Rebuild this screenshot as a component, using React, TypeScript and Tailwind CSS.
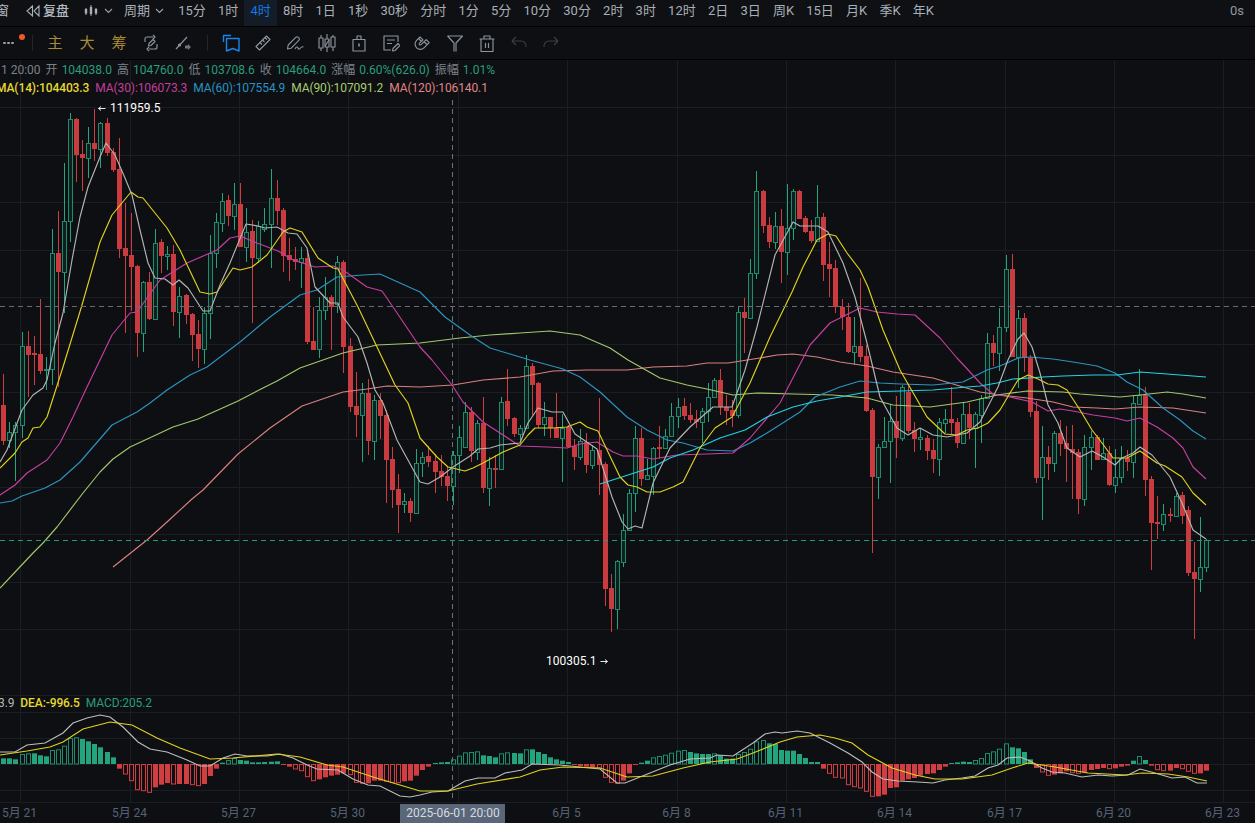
// K-line chart page
type Candle = [number, number, number, number, number]

// [up, high, bodyTop, bodyBottom, low] in page pixels
const candles: Candle[] = [
  [0,374,405,441,445],[1,422,432,440,448],[1,422,425,432,481],[1,332,346,425,438],[0,331,346,355,397],[0,336,353,355,385],[0,299,354,371,374],[1,357,369,370,390],[1,229,253,369,385],[0,211,253,272,387],
  [1,163,221,272,313],[1,113,119,221,242],[0,118,119,155,182],[0,140,154,158,191],[1,127,143,158,178],[0,109,143,149,161],[1,122,123,149,168],[0,118,123,153,156],[0,148,152,170,172],[0,138,169,249,258],
  [0,203,248,256,333],[0,213,255,267,311],[0,265,266,333,357],[1,281,282,333,352],[0,272,282,319,320],[1,229,243,319,320],[0,239,242,256,273],[1,246,254,256,270],[0,245,254,312,326],[1,287,296,312,338],
  [0,294,295,315,324],[0,313,314,335,361],[0,320,334,349,368],[1,307,313,349,364],[1,235,253,313,339],[1,213,222,253,268],[1,193,201,223,232],[0,195,200,216,226],[1,183,204,216,230],[0,183,204,247,247],
  [1,208,232,247,262],[0,220,231,258,323],[1,221,226,258,263],[1,208,224,229,232],[1,169,198,224,268],[0,180,198,211,225],[0,208,210,256,272],[0,238,255,260,281],[0,247,259,262,270],[1,247,258,262,288],
  [0,250,258,342,344],[0,307,341,350,350],[1,297,310,349,358],[1,277,297,310,320],[0,295,297,307,350],[1,256,262,304,313],[0,260,262,347,373],[0,338,346,407,412],[0,372,406,415,437],[1,383,393,415,462],
  [0,379,393,441,455],[1,395,400,441,460],[0,393,400,416,439],[0,410,415,460,503],[0,447,459,490,508],[0,474,489,505,533],[1,493,501,504,513],[0,498,501,513,522],[1,449,463,513,513],[1,452,457,463,477],
  [0,446,456,462,467],[0,454,461,472,493],[0,455,471,477,486],[0,467,476,486,501],[1,451,455,486,505],[1,426,437,455,473],[1,402,412,447,447],[0,407,412,451,462],[1,420,423,452,460],[0,397,423,488,493],
  [1,457,468,488,506],[0,455,468,470,488],[1,397,402,469,470],[0,369,401,419,426],[0,417,418,434,437],[1,425,428,434,443],[1,355,366,428,429],[0,363,366,385,415],[0,382,383,425,428],[1,402,417,424,436],
  [0,417,417,428,438],[0,393,428,438,438],[1,414,428,438,482],[0,425,427,447,447],[0,439,446,457,470],[1,429,441,457,460],[0,433,442,465,473],[1,445,450,465,469],[0,398,450,465,495],[0,462,464,589,606],
  [0,574,588,609,632],[1,560,561,609,629],[1,514,530,562,567],[1,489,493,530,531],[1,426,438,493,512],[0,428,438,479,486],[1,459,475,479,480],[1,447,448,476,495],[0,426,447,449,459],[1,429,436,448,448],
  [1,403,416,436,436],[1,398,407,416,428],[0,398,406,416,420],[0,403,415,420,423],[0,410,419,422,428],[1,408,411,422,443],[1,383,397,411,422],[1,378,380,397,397],[0,369,380,407,415],[0,395,407,411,425],
  [0,400,410,416,427],[1,307,312,415,418],[0,298,312,318,353],[1,259,273,318,318],[1,171,191,273,279],[0,190,191,226,233],[0,217,225,242,248],[1,212,226,242,249],[0,209,226,252,283],[1,184,228,252,275],
  [1,189,191,228,240],[0,190,191,219,219],[0,216,218,232,233],[0,220,231,241,243],[1,185,217,241,241],[0,213,217,265,281],[0,242,264,269,297],[0,260,268,307,313],[0,299,307,317,330],[0,303,317,352,353],
  [1,317,346,352,365],[0,278,346,357,362],[0,345,356,411,412],[0,408,410,477,553],[1,444,447,477,499],[1,417,441,447,448],[1,404,421,441,483],[0,396,421,438,458],[1,385,387,438,441],[0,384,392,431,433],
  [0,422,430,439,452],[1,428,437,439,450],[0,435,438,451,460],[0,439,450,459,473],[1,418,422,459,476],[1,409,419,423,433],[0,387,419,423,434],[0,418,422,443,448],[1,402,414,443,443],[0,403,414,428,439],
  [1,412,414,428,468],[1,395,398,415,443],[1,333,343,398,398],[0,335,343,353,366],[1,308,327,353,371],[1,255,269,327,332],[0,254,269,357,357],[1,310,318,357,388],[0,313,318,358,372],[0,355,358,412,417],
  [0,401,411,478,483],[1,426,457,477,520],[0,446,457,464,480],[1,431,433,463,472],[0,420,433,444,456],[0,426,443,449,482],[0,425,449,453,499],[0,449,452,499,514],[1,435,447,499,506],[1,431,437,447,470],
  [0,435,437,460,460],[1,438,453,459,460],[0,446,453,485,486],[1,449,477,485,493],[1,446,458,477,483],[0,450,458,462,471],[1,395,403,462,478],[1,369,395,404,405],[0,387,395,480,496],[0,476,479,523,570],
  [0,496,522,524,539],[1,504,514,524,531],[0,508,514,516,522],[1,493,496,516,516],[0,492,495,516,524],[0,506,510,573,576],[0,542,572,579,639],[1,517,567,579,592],[1,539,540,567,572],
]

const macd: number[] = [
  17,17,14,30,32,32,26,23,42,44,55,78,80,75,68,60,50,36,20,
  -14,-30,-50,-77,-80,-85,-70,-62,-57,-60,-60,-60,-62,-65,-60,-36,-14,4,12,18,12,10,5,5,6,7,8,-3,-8,-15,-20,-38,-50,-46,-40,-35,-32,-28,-32,-55,-58,-58,-50,-50,-52,-55,-56,-52,-50,-35,
  -18,-8,3,5,6,14,25,35,36,38,26,24,20,32,35,33,32,44,44,36,30,20,14,10,6,-3,-6,-8,-10,-12,-40,-55,-58,-50,-28,-3,4,10,20,24,28,34,40,42,36,32,30,30,32,26,16,16,30,36,46,68,72,62,60,42,40,40,30,18,6,6,-14,-28,
  -40,-42,-62,-68,-72,-82,-97,-97,-92,-72,-70,-50,-46,-42,-35,-30,-28,-18,-8,3,5,7,6,12,18,33,38,46,62,50,47,36,14,-12,-24,-34,-32,-28,-22,-26,-28,-26,-18,-15,-12,-14,-13,-8,-5,10,24,12,-5,-17,-20,-20,-12,-14,-22,-28,-28,-20,
]

const lines: { color: string; points: string }[] = [
  { color: "#d98080", points: "113,567 147,540 167,522 192,499 203,490 238,454 270,428 302,406 343,392 367,389 387,386 420,387 453,385 483,380 520,377 553,371 587,370 627,370 653,367 687,366 707,363 728,363 760,358 777,355 793,354 817,357 840,362 867,366 893,372 933,378 963,387 980,392 1000,395 1027,398 1053,402 1073,407 1097,408 1115,409 1140,407 1173,408 1206,413" },
  { color: "#a3c76c", points: "0,588 17,570 33,553 43,543 57,527 83,493 100,472 113,459 130,447 143,441 173,427 198,419 238,401 263,388 277,381 300,368 343,353 377,345 420,343 460,338 490,335 520,333 550,331 580,335 610,348 628,360 660,378 687,385 707,389 733,395 757,393 793,394 833,395 867,398 893,405 930,407 967,402 980,399 997,395 1027,391 1063,392 1080,394 1120,397 1140,395 1167,392 1183,394 1206,398" },
  { color: "#2d93c0", points: "0,503 12,501 22,496 45,488 60,480 80,462 112,425 137,412 150,403 167,390 190,375 207,367 240,342 270,317 300,295 317,290 337,277 363,275 380,274 400,283 420,292 445,317 470,335 490,348 510,354 530,360 563,369 580,377 600,392 627,417 647,430 667,440 683,443 707,450 733,451 750,443 767,433 800,412 815,397 840,387 860,381 880,383 900,384 933,385 963,382 973,377 987,370 1000,366 1018,358 1030,357 1053,359 1073,362 1097,366 1115,373 1127,382 1143,390 1163,408 1180,420 1193,431 1206,439" },
  { color: "#c63fa0", points: "0,495 15,485 27,473 47,460 60,443 73,417 87,387 112,335 130,313 137,312 160,280 187,263 217,250 230,238 240,236 257,243 278,251 293,260 315,267 333,266 343,270 367,287 382,291 393,307 420,347 432,360 452,385 463,402 483,422 520,446 547,447 567,448 580,444 597,442 613,452 623,456 637,456 653,459 677,455 707,454 733,453 750,438 780,403 797,370 810,345 830,323 860,308 877,312 897,314 915,315 940,338 957,358 970,372 980,383 993,394 1010,397 1032,402 1048,411 1060,409 1073,411 1093,415 1115,418 1127,421 1140,418 1157,427 1173,438 1183,448 1193,467 1206,479" },
  { color: "#22d3e6", points: "600,484 653,467 670,458 693,450 720,438 745,430 757,423 767,417 793,407 817,401 840,397 867,392 900,391 933,390 967,387 980,386 997,383 1013,379 1043,377 1063,376 1093,375 1117,375 1140,372 1167,374 1193,376 1206,377" },
  { color: "#e0d21d", points: "0,468 15,453 22,442 28,438 33,428 40,427 47,417 63,367 82,305 100,242 112,215 131,192 138,197 143,198 167,228 180,250 200,292 210,294 217,292 233,268 240,270 252,267 267,255 283,232 290,228 302,232 318,258 333,268 338,269 358,307 377,347 395,385 408,403 420,438 437,457 448,467 465,471 473,468 483,463 503,452 520,445 528,435 535,428 553,428 567,427 580,422 587,427 598,431 608,452 620,477 628,485 637,487 647,492 660,492 673,487 683,482 700,448 715,428 732,417 750,383 770,337 792,292 803,267 817,240 828,234 836,236 847,253 860,270 868,287 883,330 900,370 927,417 945,434 957,435 967,430 978,428 988,423 1000,410 1010,393 1018,380 1028,375 1038,379 1048,384 1058,385 1067,390 1080,410 1092,430 1102,443 1113,458 1127,458 1140,451 1157,463 1165,466 1182,477 1193,493 1206,505" },
  { color: "#b4b4b4", points: "0,462 7,450 22,410 33,395 43,388 47,380 55,343 63,313 72,260 80,217 88,187 100,157 106,143 115,155 125,178 132,195 140,230 148,263 155,278 165,279 173,285 179,280 188,288 203,311 210,311 220,285 230,263 246,224 258,226 265,228 277,227 288,233 297,234 307,248 315,287 330,303 338,303 343,317 358,337 367,363 375,390 383,403 397,440 420,482 428,484 440,477 453,467 470,456 478,449 490,448 500,445 520,443 528,423 538,408 552,412 563,412 575,434 597,449 612,497 622,522 628,529 635,526 642,528 653,483 670,448 690,427 713,407 732,407 745,370 757,327 775,255 793,222 800,226 818,226 828,232 843,263 855,297 867,343 880,397 897,428 908,435 920,428 933,435 947,437 967,433 980,422 998,387 1008,360 1018,339 1024,333 1032,347 1040,373 1048,405 1058,423 1067,448 1080,457 1092,451 1103,457 1115,465 1122,458 1133,453 1140,447 1152,455 1170,477 1182,503 1193,530 1206,539" },
]

const dif = "0,752 15,752 27,745 45,743 63,733 73,723 87,718 100,715 110,717 123,727 138,742 150,749 167,752 187,760 200,766 210,766 223,758 235,754 247,756 267,756 280,754 293,758 307,765 317,769 338,770 353,779 368,785 380,786 400,796 410,797 420,795 432,792 448,791 465,781 478,778 495,778 505,773 522,770 532,764 560,765 600,769 617,783 625,783 640,777 670,765 690,759 710,758 717,755 733,756 753,743 765,734 775,732 782,733 797,731 810,733 830,743 848,753 862,762 872,772 883,779 898,781 918,782 933,783 945,780 962,778 975,776 988,768 998,765 1007,758 1020,757 1030,761 1042,768 1052,772 1065,773 1082,777 1098,775 1112,776 1128,775 1140,769 1155,773 1172,778 1185,777 1197,783 1207,783"
const dea = "0,755 27,751 50,747 63,742 83,729 110,722 132,725 157,738 180,748 210,759 233,758 277,754 300,757 327,765 343,767 373,777 420,791 448,791 477,784 520,777 540,770 563,767 600,768 627,777 653,776 683,768 710,762 737,759 753,753 780,742 797,737 820,735 835,738 852,743 868,755 892,768 915,775 935,779 962,779 992,775 1012,768 1028,763 1055,767 1088,773 1125,775 1142,773 1168,774 1188,777 1207,781"

const gridX = [20.5, 130.5, 239.5, 348.5, 458.5, 567.5, 677.5, 786.5, 895.5, 1005.5, 1114.5, 1223.5]
const gridY = [107.5, 155.5, 202.5, 250.5, 297.5, 344.5, 392.5, 439.5, 487.5, 534.5, 582.5, 629.5, 695.5, 712.5, 738.5, 764.5, 790.5, 802.5]
const axis = ["5月 21", "5月 24", "5月 27", "5月 30", "", "6月 5", "6月 8", "6月 11", "6月 14", "6月 17", "6月 20", "6月 23"]

const periods = ["15分", "1时", "4时", "8时", "1日", "1秒", "30秒", "分时", "1分", "5分", "10分", "30分", "2时", "3时", "12时", "2日", "3日", "周K", "15日", "月K", "季K", "年K"]

const UP = "#22a67e"
const UP_BODY = "#1d8c6c"
const DOWN = "#d03d40"
const xAt = (n: number) => Math.round(3.3 + n * 6.074)

const Chevron = () => (
  <svg width="9" height="6" viewBox="0 0 9 6" fill="none" stroke="#9aa0a8" strokeWidth="1.1">
    <path d="M1 1l3.5 3.5L8 1" />
  </svg>
)

const Icon = ({ children, color = "#8d949d" }: { children: React.ReactNode; color?: string }) => (
  <span className="flex h-8 w-8 items-center justify-center">
    <svg width="18" height="18" viewBox="0 0 18 18" fill="none" stroke={color} strokeWidth="1.15" strokeLinejoin="round">
      {children}
    </svg>
  </span>
)

const ToolDivider = () => <span className="mx-[7.5px] h-[16px] w-px bg-[#22262b]" />

const Chart = () => (
  <svg className="absolute inset-0 block h-full w-full" viewBox="0 60 1255 763">
    {gridX.map((x) => (
      <line key={x} x1={x} x2={x} y1={60} y2={802} stroke="#1a1d21" />
    ))}
    {gridY.map((y) => (
      <line key={y} x1={0} x2={1255} y1={y} y2={y} stroke="#1a1d21" />
    ))}

    {candles.map(([up, high, top, bottom, low], n) => {
      const x = xAt(n)
      const color = up ? UP : DOWN
      return (
        <g key={n}>
          <line x1={x + 0.5} x2={x + 0.5} y1={high} y2={low} stroke={color} />
          {up ? (
            <rect x={x - 1.5} y={top + 0.5} width={4} height={bottom - top} fill="#0e1f1d" stroke={UP_BODY} />
          ) : (
            <rect x={x - 2} y={top} width={5} height={bottom - top} fill="#c93b3e" />
          )}
        </g>
      )
    })}

    {lines.map((l) => (
      <polyline key={l.color} points={l.points} fill="none" stroke={l.color} strokeWidth="1.15" strokeLinejoin="round" />
    ))}

    <line x1={0} x2={1255} y1={306.5} y2={306.5} stroke="#6b6878" strokeDasharray="5 4" />
    <line x1={0} x2={1255} y1={540.5} y2={540.5} stroke="#1f9c78" strokeDasharray="5 4" />
    <line x1={452.5} x2={452.5} y1={100} y2={802} stroke="#6d7178" strokeDasharray="5 4" />

    <path d="M98.5 108.5h7M98.5 108.5l2.5-2M98.5 108.5l2.5 2" stroke="#e8e8e8" fill="none" />
    <text x={110} y={112} fill="#ffffff" fontSize="12">111959.5</text>
    <text x={546} y={665} fill="#ffffff" fontSize="12">100305.1</text>
    <path d="M600.5 661.5h7M607.5 661.5l-2.5-2M607.5 661.5l-2.5 2" stroke="#e8e8e8" fill="none" />

    {macd.map((v, n) => {
      const h = Math.abs(v) / 3
      const x = xAt(n)
      const color = v > 0 ? UP_BODY : DOWN
      const prev = n > 0 ? macd[n - 1] : 0
      const hollow = prev * v > 0 && Math.abs(v) > Math.abs(prev) && h > 3.5
      const y = v > 0 ? 764 - h : 764
      return hollow ? (
        <rect key={n} x={x - 1.5} y={y + 0.5} width={4} height={h - 0.5} fill="none" stroke={color} />
      ) : (
        <rect key={n} x={x - 2} y={y} width={5} height={h} fill={v > 0 ? "#23a47d" : "#d13e41"} />
      )
    })}
    <polyline points={dif} fill="none" stroke="#bdbdbd" strokeWidth="1.15" />
    <polyline points={dea} fill="none" stroke="#e0d21d" strokeWidth="1.15" />

    {axis.map((label, i) =>
      label ? (
        <text key={i} x={gridX[i] - 1} y={817} textAnchor="middle" fill="#566378" fontSize="12">
          {label}
        </text>
      ) : null
    )}
    <rect x={400} y={804} width={105} height={19} fill="#5a6779" />
    <text x={453} y={817} textAnchor="middle" fill="#d5dae0" fontSize="12">2025-06-01 20:00</text>
  </svg>
)

const Value = ({ label, value }: { label: string; value: string }) => (
  <span className="flex gap-[4px]">
    <span className="text-[#7d828a]">{label}</span>
    <span className="text-[#2a9d7c]">{value}</span>
  </span>
)

const App = () => {
  return (
    <div className="flex h-screen w-full flex-col overflow-hidden bg-[#0d0f12] text-[13px] text-[#a9afb8] [font-family:Roboto,'Noto_Sans_CJK_SC',sans-serif]">
      {/* period bar */}
      <div className="flex h-[27px] shrink-0 items-center border-b border-black bg-[#0e1013]">
        <div className="mb-[4px] flex items-center">
          <span className="-ml-[4px] w-[13px] overflow-hidden whitespace-nowrap text-[#b4bac2]">窗</span>
          <svg className="ml-[17px]" width="14" height="12" viewBox="0 0 14 12" fill="none" stroke="#a9afb8" strokeWidth="1.1">
            <path d="M6.5 1L1 6l5.5 5zM13 1L8 6l5 5z" />
          </svg>
          <span className="ml-[3px] font-medium text-[#b4bac2]">复盘</span>
          <svg className="ml-[15px]" width="14" height="14" viewBox="0 0 14 14" fill="#a9afb8" stroke="#a9afb8">
            <path d="M2 4v7M7 1v11M12 4v7" strokeWidth="1" />
            <rect x="0.8" y="5" width="2.4" height="4.5" stroke="none" />
            <rect x="5.8" y="3" width="2.4" height="7" stroke="none" />
            <rect x="10.8" y="5" width="2.4" height="4.5" stroke="none" />
          </svg>
          <span className="ml-[6px]"><Chevron /></span>
          <span className="ml-[11px]">周期</span>
          <span className="ml-[5px]"><Chevron /></span>
        </div>
        <div className="ml-[8px] flex h-full items-center">
          {periods.map((p) => (
            <span
              key={p}
              className={
                p === "4时"
                  ? "flex h-full items-center bg-[#131c27] px-[6.1px] pb-[4px] text-[#1677e6]"
                  : "flex h-full items-center px-[6.1px] pb-[4px]"
              }
            >
              {p}
            </span>
          ))}
        </div>
        <span className="mb-[4px] ml-auto mr-[11px] text-[#8f98a3]">0s</span>
      </div>

      {/* drawing tools */}
      <div className="flex h-[33px] shrink-0 items-center border-b border-black pl-[3px]">
        <span className="relative flex h-8 w-[13px] items-center gap-[1.5px]">
          <i className="h-[2.5px] w-[2.5px] rounded-full bg-[#9aa0a8]" />
          <i className="h-[2.5px] w-[2.5px] rounded-full bg-[#9aa0a8]" />
          <i className="h-[2.5px] w-[2.5px] rounded-full bg-[#9aa0a8]" />
          <i className="absolute left-[16px] top-[7px] h-[6px] w-[6px] rounded-full bg-[#f0572a]" />
        </span>
        <span className="ml-[16px] h-[16px] w-px bg-[#22262b]" />
        <div className="ml-[6px] flex items-center text-[15px] text-[#a98a35]">
          <span className="flex w-8 justify-center">主</span>
          <span className="flex w-8 justify-center">大</span>
          <span className="flex w-8 justify-center">筹</span>
        </div>
        <Icon>
          <path d="M3 8V5a2 2 0 0 1 2-2h6M11 1l2 2-2 2M15 10v3a2 2 0 0 1-2 2H7M7 17l-2-2 2-2" />
          <path d="M6.5 12l.5-2.5 4-4 2 2-4 4z" />
        </Icon>
        <Icon>
          <path d="M2 15L13 3" />
          <circle cx="5.5" cy="11" r="1" fill="#8d949d" />
          <path d="M11 11.5h3V10l3 3-3 3v-1.5h-3z" fill="#6d737b" stroke="none" />
        </Icon>
        <ToolDivider />
        <Icon color="#1a84ee">
          <path d="M1.5 8V1.5H9" strokeWidth="1.4" />
          <path d="M4.5 4.5h12.5V17l-6.2-2.5L4.5 17z" strokeWidth="1.4" />
        </Icon>
        <Icon>
          <path d="M2 12.5L12.5 2 16 5.5 5.5 16z" />
          <path d="M6 8.5l2 2M8.5 6l2 2M11 3.5l2 2" />
        </Icon>
        <Icon>
          <path d="M1.5 15l.7-4L10 3.2a1.5 1.5 0 0 1 2 0l1 1a1.5 1.5 0 0 1 0 2L5 14.3z" />
          <path d="M9 15c1-2.5 2.5-2.5 3-1s1.5 1.5 2.5 0 2-1.5 3-1" />
        </Icon>
        <Icon>
          <path d="M3 1v3M3 14v3M9 0v5M9 13v5M15 1v2M15 13v4" />
          <rect x="1" y="4" width="4" height="10" />
          <rect x="7" y="5" width="4" height="8" />
          <rect x="13" y="3" width="4" height="10" />
          <path d="M7 12l4-6" />
        </Icon>
        <Icon>
          <path d="M3 5.5h12V17H3zM7 5.5V2h4v3.5" />
          <path d="M9 9.5v3" strokeWidth="1.6" />
        </Icon>
        <Icon>
          <path d="M16 8V2H2v14h7" />
          <path d="M5 6h8M5 9.5h5" />
          <path d="M10.5 17l.5-2.5 5-5 2 2-5 5z" />
        </Icon>
        <Icon>
          <path d="M6 3L2.6 6.4a5.2 5.2 0 0 0 7.4 7.4l5.2-5.1-3-3-5.1 5a1.1 1.1 0 0 1-1.6-1.6L9 5.8z" />
          <path d="M4.5 4.5l3 3M10 7.5l3 3" />
        </Icon>
        <Icon>
          <path d="M1.5 2h15L10 9v8.5M8 17.5V9L1.5 2" />
        </Icon>
        <Icon>
          <path d="M1.5 5h15M6 5V2h6v3M3 5v12.5h12V5M7.5 9v5M10.5 9v5" />
        </Icon>
        <Icon color="#3a3f45">
          <path d="M2 7h9a5 5 0 0 1 5 5v1M2 7l4-4M2 7l4 4" />
        </Icon>
        <Icon color="#3a3f45">
          <path d="M16 7H7a5 5 0 0 0-5 5v1M16 7l-4-4M16 7l-4 4" />
        </Icon>
      </div>

      {/* chart */}
      <div className="relative min-h-0 flex-1">
        <Chart />
        <div className="absolute left-0 top-[1px] flex h-[18px] items-center gap-[5px] whitespace-nowrap text-[12px]">
          <span className="ml-[1px] text-[#7d828a]">1 20:00</span>
          <Value label="开" value="104038.0" />
          <Value label="高" value="104760.0" />
          <Value label="低" value="103708.6" />
          <Value label="收" value="104664.0" />
          <Value label="涨幅" value="0.60%(626.0)" />
          <Value label="振幅" value="1.01%" />
        </div>
        <div className="absolute -left-[4px] top-[19px] flex h-[18px] items-center gap-[6px] whitespace-nowrap text-[12px] tracking-[-0.1px]">
          <span className="font-medium text-[#e6d932]">MA(14):104403.3</span>
          <span className="text-[#c23f9b]">MA(30):106073.3</span>
          <span className="text-[#2b92c4]">MA(60):107554.9</span>
          <span className="text-[#a9cc70]">MA(90):107091.2</span>
          <span className="text-[#e08585]">MA(120):106140.1</span>
        </div>
        <div className="absolute -left-[2px] top-[634px] flex h-[18px] items-center gap-[6px] whitespace-nowrap text-[12px] tracking-[-0.1px]">
          <span className="text-[#b8b8b8]">3.9</span>
          <span className="font-medium text-[#e6d932]">DEA:-996.5</span>
          <span className="text-[#2a9d7c]">MACD:205.2</span>
        </div>
      </div>
    </div>
  )
}

export default App
